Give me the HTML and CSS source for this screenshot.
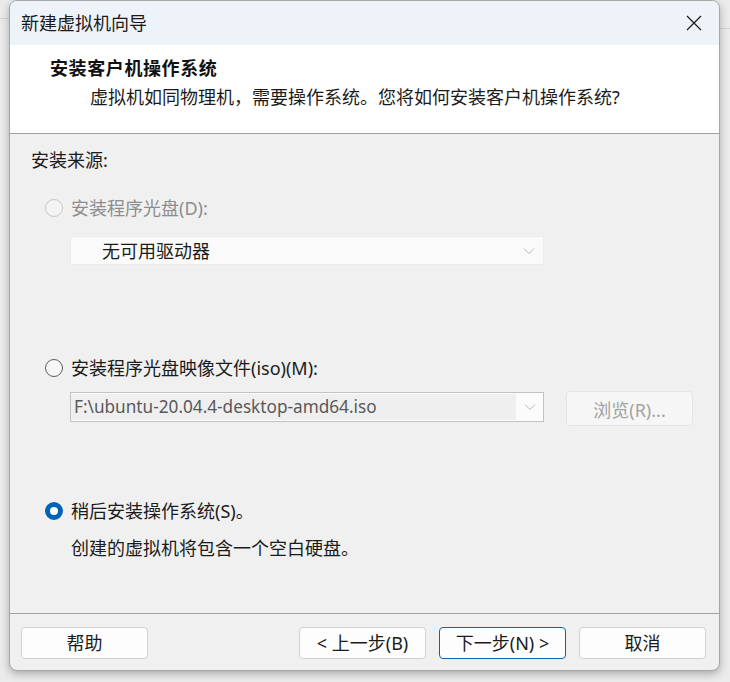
FILE: index.html
```html
<!DOCTYPE html>
<html lang="zh-CN">
<head>
<meta charset="utf-8">
<title>新建虚拟机向导</title>
<link rel="stylesheet" href="styles.css">
</head>
<body>
<div class="window">
  <div class="titlebar">
    <span class="title">新建虚拟机向导</span>
    <svg class="close" width="16" height="16" viewBox="0 0 16 16"><path d="M1 1 L15 15 M15 1 L1 15" stroke="#1a1a1a" stroke-width="1.2" fill="none"/></svg>
  </div>
  <div class="header">
    <div class="heading">安装客户机操作系统</div>
    <div class="subtitle">虚拟机如同物理机，需要操作系统。您将如何安装客户机操作系统?</div>
  </div>
  <div class="content">
    <div class="section-label">安装来源:</div>

    <div class="radio-row disabled r1">
      <span class="radio radio-disabled"></span>
      <span class="radio-text">安装程序光盘(D):</span>
    </div>
    <div class="dropdown">
      <span class="dropdown-text">无可用驱动器</span>
      <svg class="chevron" width="12" height="8" viewBox="0 0 12 8"><path d="M1 1.5 L6 6.5 L11 1.5" stroke="#b8b8b8" stroke-width="1" fill="none"/></svg>
    </div>

    <div class="radio-row r2">
      <span class="radio"></span>
      <span class="radio-text">安装程序光盘映像文件(iso)(M):</span>
    </div>
    <div class="iso-row">
      <div class="combo">
        <div class="combo-field">F:\ubuntu-20.04.4-desktop-amd64.iso</div>
        <div class="combo-btn">
          <svg width="12" height="8" viewBox="0 0 12 8"><path d="M1 1.5 L6 6.5 L11 1.5" stroke="#b8b8b8" stroke-width="1" fill="none"/></svg>
        </div>
      </div>
      <div class="browse">浏览(R)...</div>
    </div>

    <div class="radio-row r3">
      <span class="radio radio-checked"></span>
      <span class="radio-text">稍后安装操作系统(S)。</span>
    </div>
    <div class="desc">创建的虚拟机将包含一个空白硬盘。</div>
  </div>
  <div class="footer">
    <div class="btn">帮助</div>
    <div class="footer-right">
      <div class="btn">&lt; 上一步(B)</div>
      <div class="btn btn-default">下一步(N) &gt;</div>
      <div class="btn">取消</div>
    </div>
  </div>
</div>
</body>
</html>
```

FILE: styles.css
```css
* { box-sizing: border-box; }

html, body {
  margin: 0;
  padding: 0;
}

body {
  width: 730px;
  height: 682px;
  overflow: hidden;
  background:
    linear-gradient(#d4d4d4, #d4d4d4) 0 18px / 9px 1px no-repeat,
    linear-gradient(#d4d4d4, #d4d4d4) 720px 28px / 10px 1px no-repeat,
    #ebebeb;
  font-family: "Noto Sans", "Noto Sans CJK SC", sans-serif;
  font-size: 18px;
  color: #1b1b1b;
}

.window {
  margin-left: 9px;
  width: 711px;
  height: 671px;
  border: 1px solid #a6a6a6;
  border-radius: 8px;
  overflow: hidden;
  background: #f0f0f0;
  box-shadow: 0 3px 8px rgba(0, 0, 0, 0.28);
  display: flex;
  flex-direction: column;
}

.titlebar {
  height: 44px;
  flex: none;
  background: #eef2f9;
  display: flex;
  align-items: center;
  justify-content: space-between;
  padding: 0 17px 0 11px;
}

.title {
  font-size: 18px;
  line-height: 24px;
  color: #1a1a1a;
}

.close { display: block; }

.header {
  height: 89px;
  flex: none;
  background: #ffffff;
  border-bottom: 1px solid #a0a0a0;
  padding: 11px 0 0 40px;
}

.heading {
  font-weight: bold;
  line-height: 24px;
  color: #111;
  letter-spacing: 0.6px;
}

.subtitle {
  margin-top: 5px;
  margin-left: 40px;
  line-height: 24px;
  color: #1b1b1b;
}

.content {
  height: 480px;
  flex: none;
  padding: 14px 0 0 21px;
  border-bottom: 1px solid #a0a0a0;
}

.section-label {
  line-height: 24px;
}

.radio-row {
  display: flex;
  align-items: center;
  height: 24px;
  margin-left: 14px;
  gap: 8px;
}

.r1 { margin-top: 24px; }
.r2 { margin-top: 91px; }
.r3 { margin-top: 73px; }

.radio-text { line-height: 24px; }

.disabled .radio-text { color: #8d8d8d; }

.radio {
  width: 18px;
  height: 18px;
  border-radius: 50%;
  border: 1px solid #5e5e5e;
  background: #f6f6f6;
  flex: none;
}

.radio-disabled {
  border-color: #c6c6c6;
  background: #f4f4f4;
}

.radio-checked {
  border: 5.5px solid #0063b8;
  background: #ffffff;
}

.dropdown {
  margin: 16px 0 0 39px;
  width: 474px;
  height: 29px;
  background: #fafafa;
  border: 1px solid #ebebeb;
  border-radius: 2px;
  display: flex;
  align-items: center;
  justify-content: space-between;
  padding: 0 8px 0 31px;
}

.dropdown-text {
  line-height: 24px;
  color: #1b1b1b;
}

.chevron { display: block; }

.iso-row {
  margin: 11px 0 0 39px;
  display: flex;
  align-items: flex-start;
  gap: 22px;
  height: 35px;
}

.combo {
  margin-top: 1px;
  width: 474px;
  height: 30px;
  border: 1px solid #c2c2c2;
  background: #fbfbfb;
  display: flex;
}

.combo-field {
  width: 445px;
  margin: 1px 0;
  background: #efefef;
  font-size: 17.2px;
  line-height: 26px;
  padding-left: 3px;
  color: #595959;
  white-space: nowrap;
  overflow: hidden;
}

.combo-btn {
  flex: 1;
  display: flex;
  align-items: center;
  justify-content: center;
}

.combo-btn svg { display: block; }

.browse {
  width: 127px;
  height: 35px;
  border: 1px solid #e5e5e5;
  border-radius: 4px;
  background: #f6f6f6;
  color: #a3a3a3;
  display: flex;
  align-items: center;
  justify-content: center;
}

.desc {
  margin: 13px 0 0 40px;
  line-height: 24px;
}

.footer {
  flex: 1;
  display: flex;
  justify-content: space-between;
  padding: 13px 13px 0 11px;
}

.footer-right {
  display: flex;
  gap: 13px;
}

.btn {
  width: 127px;
  height: 32px;
  border: 1px solid #d2d2d2;
  border-radius: 4px;
  background: #fdfdfd;
  display: flex;
  align-items: center;
  justify-content: center;
  line-height: 24px;
  color: #1b1b1b;
}

.btn-default {
  border-color: #0067c0;
}
```
